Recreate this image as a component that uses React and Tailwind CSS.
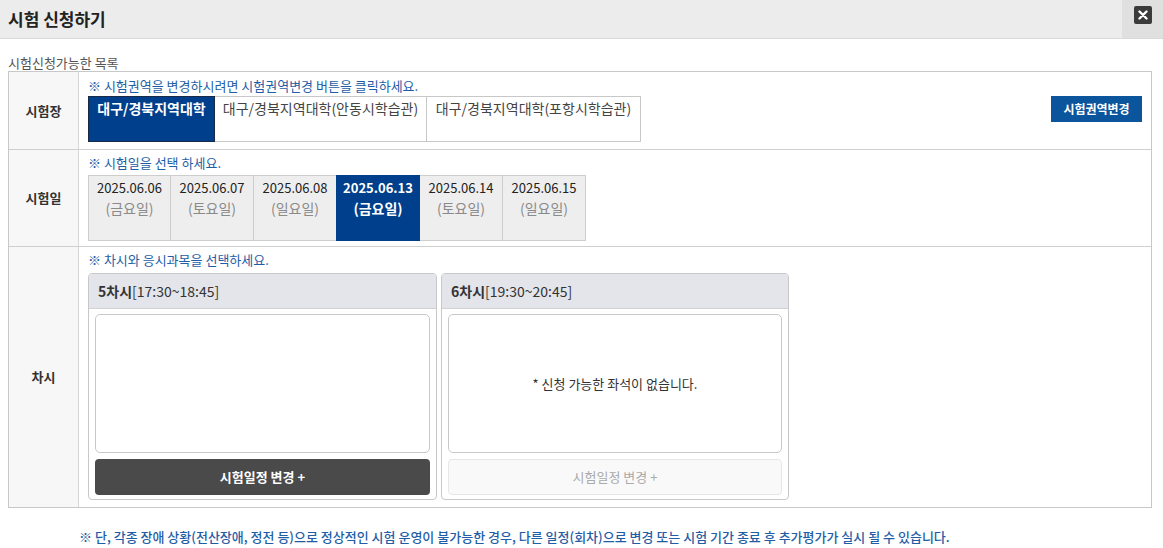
import { useState } from "react";

const FONT = { fontFamily: '"Noto Sans CJK KR", "Noto Sans", sans-serif' };

const CENTERS = [
  { name: "대구/경북지역대학", w: "w-[127px]" },
  { name: "대구/경북지역대학(안동시학습관)", w: "w-[213px]" },
  { name: "대구/경북지역대학(포항시학습관)", w: "w-[215px]" },
];

const DATES = [
  { date: "2025.06.06", day: "(금요일)" },
  { date: "2025.06.07", day: "(토요일)" },
  { date: "2025.06.08", day: "(일요일)" },
  { date: "2025.06.13", day: "(금요일)" },
  { date: "2025.06.14", day: "(토요일)" },
  { date: "2025.06.15", day: "(일요일)" },
];

const SESSIONS = [
  { no: "5차시", time: "[17:30~18:45]", seats: true, w: "w-[349px]" },
  { no: "6차시", time: "[19:30~20:45]", seats: false, w: "w-[348px]" },
];

function Note({ children }) {
  return <p className="text-[13px] leading-[18px] text-[#1f5ea6]">{children}</p>;
}

function Row({ label, children, last }) {
  return (
    <div className={`flex ${last ? "" : "border-b border-[#cfcfcf]"}`}>
      <div className="w-[70px] shrink-0 bg-[#f7f7f7] border-r border-[#d6d6d6] flex items-center justify-center text-[13px] font-bold text-[#333]">
        {label}
      </div>
      <div className="flex-1 pl-[9px] pr-[9px]">{children}</div>
    </div>
  );
}

export default function App() {
  const [center, setCenter] = useState(0);
  const [date, setDate] = useState(3);

  return (
    <div className="w-full min-h-screen bg-white" style={FONT}>
      {/* 헤더 */}
      <div className="h-[39px] bg-[#ececec] border-b border-[#d9d9d9] flex justify-between">
        <h1 className="pl-2 flex items-center text-[17px] font-bold text-[#222]">시험 신청하기</h1>
        <div className="w-[41px] bg-[#e0e0e0] flex items-center justify-center">
          <button
            type="button"
            aria-label="닫기"
            className="w-[18px] h-[18px] bg-[#3b3b3b] rounded-[2px] flex items-center justify-center mb-[8px]"
          >
            <svg width="10" height="10" viewBox="0 0 10 10">
              <path d="M1.5 1.5 L8.5 8.5 M8.5 1.5 L1.5 8.5" stroke="#fff" strokeWidth="2.4" strokeLinecap="round" />
            </svg>
          </button>
        </div>
      </div>

      <div className="px-2">
        <p className="pt-[16px] text-[13px] leading-[16px] text-[#555]">시험신청가능한 목록</p>

        <div className="w-[1144px] border border-[#c8c8c8]">
          {/* 시험장 */}
          <Row label="시험장">
            <div className="pt-[5px] pb-[7px]">
              <Note>※ 시험권역을 변경하시려면 시험권역변경 버튼을 클릭하세요.</Note>
              <div className="mt-[1px] flex justify-between items-start">
                <div className="flex">
                  {CENTERS.map((c, i) => (
                    <button
                      key={c.name}
                      type="button"
                      onClick={() => setCenter(i)}
                      className={`${c.w} h-[46px] pt-[1px] text-[14px] leading-[20px] flex justify-center ${
                        i > 0 ? "-ml-px" : ""
                      } ${
                        center === i
                          ? "relative bg-[#003f8b] border border-[#1b2a44] text-white font-bold"
                          : "bg-white border border-[#c8c8c8] text-[#444]"
                      }`}
                    >
                      {c.name}
                    </button>
                  ))}
                </div>
                <button
                  type="button"
                  className="w-[91px] h-[26px] bg-[#0b559d] text-white text-[12px] font-bold"
                >
                  시험권역변경
                </button>
              </div>
            </div>
          </Row>

          {/* 시험일 */}
          <Row label="시험일">
            <div className="pt-[4px] pb-[5px]">
              <Note>※ 시험일을 선택 하세요.</Note>
              <div className="mt-[3px] flex">
                {DATES.map((d, i) => {
                  const on = date === i;
                  return (
                    <button
                      key={d.date}
                      type="button"
                      onClick={() => setDate(i)}
                      className={`${i > 0 ? "w-[84px] -ml-px" : "w-[83px]"} h-[66px] pt-[2px] flex flex-col items-center justify-start text-[13px] leading-[20px] ${
                        on
                          ? "relative bg-[#003f8b] text-white font-bold border border-[#003f8b]"
                          : "bg-[#eeeeee] border border-[#cdcdcd] text-[#222]"
                      }`}
                    >
                      <span>{d.date}</span>
                      <span className={`text-[14px] ${on ? "" : "text-[#8a8a8a]"}`}>{d.day}</span>
                    </button>
                  );
                })}
              </div>
            </div>
          </Row>

          {/* 차시 */}
          <Row label="차시" last>
            <div className="pt-[4px] pb-[7px]">
              <Note>※ 차시와 응시과목을 선택하세요.</Note>
              <div className="mt-[4px] flex gap-[4px]">
                {SESSIONS.map((s) => (
                  <div
                    key={s.no}
                    className={`${s.w} h-[227px] border border-[#c8c8c8] rounded-[4px] bg-white flex flex-col overflow-hidden`}
                  >
                    <div className="h-[35px] shrink-0 bg-[#e4e5ea] border-b border-[#d2d2d2] flex items-center pl-[9px] text-[14px] text-[#333]">
                      <span className="font-bold">{s.no}</span>
                      <span>{s.time}</span>
                    </div>
                    <div className="flex-1 flex flex-col px-[6px] pt-[5px] pb-[4px] gap-[6px]">
                      <div className="h-[139px] border border-[#c8c8c8] rounded-[5px] flex items-center justify-center text-[13px] text-[#333]">
                        {s.seats ? "" : "* 신청 가능한 좌석이 없습니다."}
                      </div>
                      {s.seats ? (
                        <button
                          type="button"
                          className="h-[36px] rounded-[4px] bg-[#4a4a4a] text-white text-[13px] font-bold"
                        >
                          시험일정 변경 +
                        </button>
                      ) : (
                        <button
                          type="button"
                          disabled
                          className="h-[36px] rounded-[4px] bg-[#f9f9f9] border border-[#e6e6e6] text-[#aaa] text-[13px]"
                        >
                          시험일정 변경 +
                        </button>
                      )}
                    </div>
                  </div>
                ))}
              </div>
            </div>
          </Row>
        </div>

        <p className="mt-[20px] pl-[71px] text-[13px] leading-[18px] font-medium text-[#1f5ea6]">
          ※ 단, 각종 장애 상황(전산장애, 정전 등)으로 정상적인 시험 운영이 불가능한 경우, 다른 일정(회차)으로 변경 또는 시험 기간 종료 후 추가평가가 실시 될 수 있습니다.
        </p>
      </div>
    </div>
  );
}
